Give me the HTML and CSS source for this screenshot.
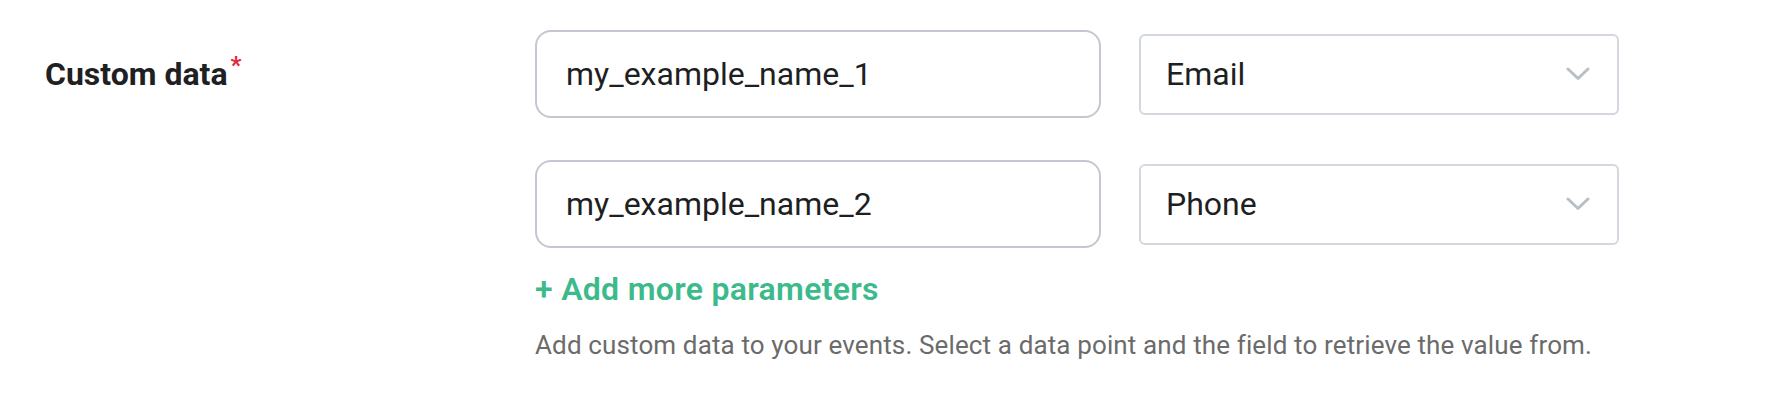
FILE: index.html
```html
<!DOCTYPE html>
<html lang="en">
<head>
<meta charset="utf-8">
<title>Custom data</title>
<link rel="stylesheet" href="styles.css">
</head>
<body>
<main class="form-row">
  <div class="label">Custom data<span class="req">*</span></div>
  <div class="fields">
    <div class="row">
      <div class="input">my_example_name_1</div>
      <div class="select"><span>Email</span>
        <svg class="chev" width="24" height="14" viewBox="0 0 24 14"><polyline points="2,2 12,11.5 22,2" fill="none" stroke="#b9bfc8" stroke-width="3" stroke-linecap="round" stroke-linejoin="round"/></svg>
      </div>
    </div>
    <div class="row">
      <div class="input">my_example_name_2</div>
      <div class="select"><span>Phone</span>
        <svg class="chev" width="24" height="14" viewBox="0 0 24 14"><polyline points="2,2 12,11.5 22,2" fill="none" stroke="#b9bfc8" stroke-width="3" stroke-linecap="round" stroke-linejoin="round"/></svg>
      </div>
    </div>
    <div class="add">+ Add more parameters</div>
    <div class="help">Add custom data to your events. Select a data point and the field to retrieve the value from.</div>
  </div>
</main>
</body>
</html>
```
FILE: styles.css
```css
html, body {
  margin: 0;
  padding: 0;
  background: #ffffff;
}
body {
  font-family: Roboto, "Noto Sans", "Liberation Sans", sans-serif;
  color: #1f2023;
}
.form-row {
  display: flex;
  padding-top: 30px;
}
.label {
  box-sizing: border-box;
  width: 535px;
  padding-left: 45px;
  font-size: 32px;
  font-weight: 700;
  line-height: 88px;
  color: #1f2023;
}
.req {
  color: #e0283c;
  font-size: 24px;
  vertical-align: top;
  position: relative;
  top: -9px;
  margin-left: 3px;
}
.fields {
  display: flex;
  flex-direction: column;
}
.row {
  display: flex;
  align-items: center;
  gap: 38px;
}
.row + .row {
  margin-top: 42px;
}
.input {
  box-sizing: border-box;
  width: 566px;
  height: 88px;
  border: 2px solid #c3c8d0;
  border-radius: 16px;
  padding-left: 29px;
  display: flex;
  align-items: center;
  font-size: 32px;
  color: #1e1f22;
}
.select {
  box-sizing: border-box;
  width: 480px;
  height: 81px;
  border: 2px solid #d3d7de;
  border-radius: 6px;
  padding: 0 27px 0 25px;
  display: flex;
  align-items: center;
  justify-content: space-between;
  font-size: 32px;
  color: #1e1f22;
}
.chev {
  display: block;
  margin-top: 0;
}
.add {
  margin-top: 21px;
  font-size: 32px;
  line-height: 40px;
  font-weight: 600;
  letter-spacing: 0.3px;
  color: #3dba8b;
}
.help {
  margin-top: 18px;
  font-size: 26px;
  line-height: 36px;
  letter-spacing: 0.13px;
  color: #6b6b6b;
}
```
